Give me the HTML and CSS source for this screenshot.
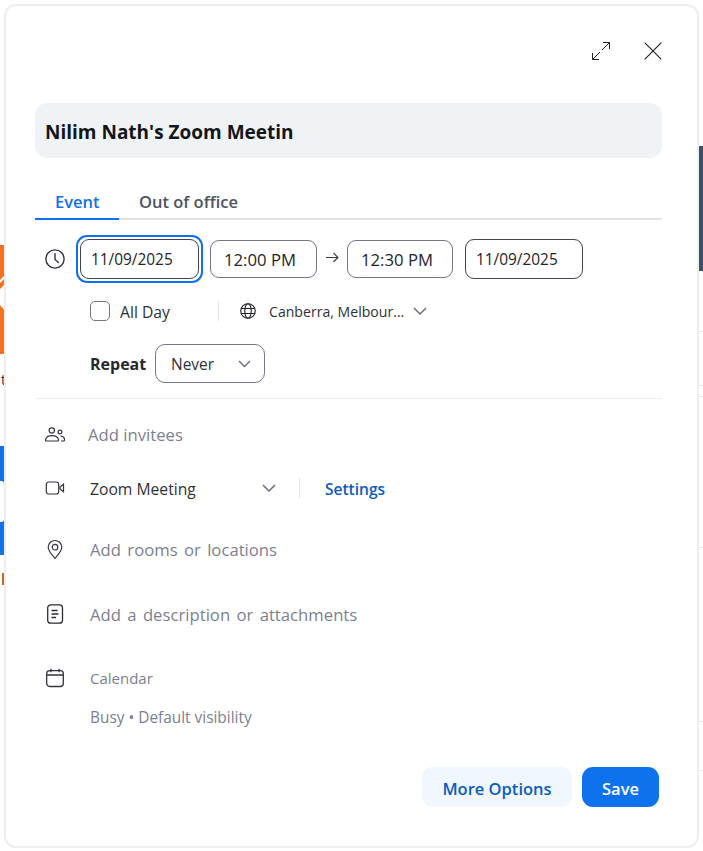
FILE: index.html
```html
<!DOCTYPE html>
<html lang="en">
<head>
  <meta charset="UTF-8">
  <meta name="viewport" content="width=device-width, initial-scale=1.0">
  <link rel="stylesheet" href="styles.css">
  <title>New event</title>
</head>
<body>

  <!-- calendar page showing behind the dialog -->
  <div class="behind">
    <svg class="bg_orange" width="5" height="109" viewBox="0 0 5 109" fill="#f5711f">
      <path d="M0 0h5v30l-5 5z"/>
      <path d="M0 38l5-5v6l-5 5z"/>
      <path d="M0 60l5 6v43H0z"/>
    </svg>
    <span class="bg_letter">t</span>
    <span class="bg_blue"></span>
    <span class="bg_white"></span>
    <span class="bg_tick"></span>
    <span class="bg_dark"></span>
    <span class="bg_line bg_l1"></span>
    <span class="bg_line bg_l2"></span>
    <span class="bg_line bg_l3"></span>
    <span class="bg_line bg_l4"></span>
    <span class="bg_line bg_l5"></span>
    <span class="bg_line bg_l6"></span>
  </div>

  <div class="dialog">

    <div class="top_icons">
      <svg class="top_icon" width="18" height="18" viewBox="0 0 18 18" fill="none" stroke="#1f2024" stroke-width="1">
        <path d="M10 8l7.500-7.500M11 .5h6.500V7M8 10L.5 17.500M.5 11v6.500H7"/>
      </svg>
      <svg class="top_icon" width="18" height="18" viewBox="0 0 18 18" fill="none" stroke="#1f2024" stroke-width="1.100">
        <path d="M.7.7l16.600 16.600M17.300.7L.7 17.300"/>
      </svg>
    </div>

    <div class="title_box">Nilim Nath's Zoom Meetin</div>

    <ul class="tabs">
      <li class="tab tab_on">Event</li>
      <li class="tab">Out of office</li>
    </ul>

    <div class="time_row">
      <svg class="clock" width="20" height="20" viewBox="0 0 20 20" fill="none" stroke="#33343c" stroke-width="1.400">
        <circle cx="10" cy="10" r="9.100"/>
        <path d="M10 4.600V10.400l3.400 3" stroke-linecap="round"/>
      </svg>
      <div class="focus_ring"><div class="field field_date field_dark">11/09/2025</div></div>
      <div class="field field_time">12:00 PM</div>
      <svg class="arrow" width="13" height="11" viewBox="0 0 13 11" fill="none" stroke="#3a3b44" stroke-width="1.100">
        <path d="M0 5.500h12M7.500 1l4.500 4.500L7.500 10"/>
      </svg>
      <div class="field field_time field_short">12:30 PM</div>
      <div class="field field_date field_dark field_last">11/09/2025</div>
    </div>

    <div class="allday_row">
      <span class="checkbox"></span>
      <span class="allday_text">All Day</span>
      <span class="vline"></span>
      <svg class="globe" width="16" height="16" viewBox="0 0 16 16" fill="none" stroke="#24252b" stroke-width="1.100">
        <circle cx="8" cy="8" r="7.300"/>
        <ellipse cx="8" cy="8" rx="3.200" ry="7.300"/>
        <path d="M1 5.500h14M1 10.500h14"/>
      </svg>
      <span class="zone">Canberra, Melbour...</span>
      <svg class="chev" width="14" height="8" viewBox="0 0 14 8" fill="none" stroke="#6a6e7a" stroke-width="1.500">
        <path d="M1 1l6 6 6-6"/>
      </svg>
    </div>

    <div class="repeat_row">
      <span class="repeat_label">Repeat</span>
      <div class="select">
        <span>Never</span>
        <svg width="13" height="8" viewBox="0 0 13 8" fill="none" stroke="#6a6e7a" stroke-width="1.400">
          <path d="M1 1l5.500 5.500L12 1"/>
        </svg>
      </div>
    </div>

    <div class="rule"></div>

    <div class="row row_invite">
      <svg class="row_icon" width="20" height="15" viewBox="0 0 20 15" fill="none" stroke="#33343c" stroke-width="1.200">
        <circle cx="6.800" cy="3.500" r="2.700"/>
        <path d="M1.400 14c-.8 0-1-.8-.8-1.600C1.200 10 3.500 8.600 7 8.600s5.800 1.400 6.400 3.800c.2.800 0 1.600-.8 1.600z"/>
        <circle cx="15" cy="5" r="1.900"/>
        <path d="M15.500 9c2 .2 3.700 1.300 4 3 .2 1.200-.3 2-1.200 2H16"/>
      </svg>
      <span class="ph ph_invite">Add invitees</span>
    </div>

    <div class="row row_zoom">
      <svg class="row_icon" width="20" height="14" viewBox="0 0 20 14" fill="none" stroke="#33343c" stroke-width="1.200">
        <rect x="1.300" y="1" width="12.400" height="12" rx="2.500"/>
        <path d="M15 6l3.500-2.800v7.600L15 8z"/>
      </svg>
      <span class="zoom_text">Zoom Meeting</span>
      <svg class="chev chev_zoom" width="14" height="8" viewBox="0 0 14 8" fill="none" stroke="#6a6e7a" stroke-width="1.500">
        <path d="M1 1l6 6 6-6"/>
      </svg>
      <span class="vline vline_zoom"></span>
      <span class="settings">Settings</span>
    </div>

    <div class="row row_room">
      <svg class="row_icon" width="20" height="20" viewBox="0 0 20 20" fill="none" stroke="#33343c" stroke-width="1.200">
        <path d="M10 19.300c-4-4.300-6.800-7.400-6.800-11a6.800 6.800 0 0 1 13.600 0c0 3.600-2.800 6.700-6.800 11z"/>
        <circle cx="10" cy="8.200" r="2.800"/>
      </svg>
      <span class="ph">Add rooms or locations</span>
    </div>

    <div class="row row_desc">
      <svg class="row_icon" width="20" height="20" viewBox="0 0 20 20" fill="none" stroke="#2b2c33" stroke-width="1.300">
        <rect x="2.700" y=".8" width="14.800" height="18.400" rx="3"/>
        <path d="M6.500 6.500h6M6.500 10h7M6.500 13.500h4.500"/>
      </svg>
      <span class="ph">Add a description or attachments</span>
    </div>

    <div class="row row_cal">
      <svg class="row_icon" width="20" height="20" viewBox="0 0 20 20" fill="none" stroke="#33343c" stroke-width="1.300">
        <rect x="1.700" y="2.700" width="16.600" height="15.800" rx="3"/>
        <path d="M1.700 7h16.600M6 .8v3.500M14 .8v3.500"/>
      </svg>
      <span class="small_text">Calendar</span>
    </div>

    <div class="busy">Busy &bull; Default visibility</div>

    <div class="actions">
      <button class="btn btn_soft">More Options</button>
      <button class="btn btn_save">Save</button>
    </div>

  </div>

</body>
</html>
```

FILE: styles.css
```css
html,body{
  margin:0px; padding:0px; height:851px; overflow:hidden; background:#fff;
  font-family:"Open Sans","Noto Sans",sans-serif;
}

ul,li{
  margin:0px; padding:0px; list-style:none;
}

/* page behind the dialog */
.behind span,.behind svg{
  position:absolute; display:block;
}

.behind .bg_orange{
  left:0px; top:245px;
}

.behind .bg_letter{
  left:1px; top:372px; font-size:14px; color:#333; line-height:16px;
}

.bg_blue{
  left:0px; top:446px; width:5px; height:109px; background:#0e72ed;
}

.bg_white{
  left:0px; top:481px; width:4px; height:41px; background:#fff; border-right:1px solid #8ab9f5; border-radius:0px 4px 4px 0px;
}

.bg_tick{
  left:2px; top:573px; width:2px; height:12px; background:#c8691c;
}

.bg_dark{
  left:699px; top:146px; width:4px; height:125px; background:#3b5068;
}

.bg_line{
  left:699px; width:4px; height:1px; background:#e4e4ea;
}

.bg_l1{ top:331px; }
.bg_l2{ top:385px; }
.bg_l3{ top:396px; }
.bg_l4{ top:547px; }
.bg_l5{ top:721px; }
.bg_l6{ top:770px; }

/* dialog */
.dialog{
  position:absolute; left:4px; top:4px; z-index:2;
  width:695px; height:844px; box-sizing:border-box;
  padding:0px 35px 0px 29px;
  background:#fff; border:2px solid #eeeeef; border-radius:12px;
}

.top_icons{
  display:flex; justify-content:flex-end; align-items:center; gap:34px;
  height:17px; padding-top:36px;
}

.top_icon{
  display:block;
}

.title_box{
  height:55px; margin-top:44px; padding-left:10px; box-sizing:border-box;
  background:#f0f3f6; border-radius:12px;
  font-size:19px; font-weight:700; line-height:58px; color:#131619;
}

.tabs{
  display:flex; height:47px; margin-top:15px; box-sizing:border-box;
  border-bottom:2px solid #e2e3e7;
}

.tab{
  height:47px; padding:15px 0px 0px 20px; box-sizing:border-box;
  font-size:16.500px; font-weight:600; line-height:28px; color:#4e5360; white-space:nowrap;
}

.tab_on{
  width:84px; color:#0e72ed; border-bottom:2px solid #0e72ed;
}

/* date and time */
.time_row{
  display:flex; align-items:center; height:48px; margin-top:15px;
}

.clock{
  margin:0px 11px 0px 10px; flex:none;
}

.focus_ring{
  padding:2px; border:2px solid #0e72ed; border-radius:11px; margin-right:7px;
}

.field{
  box-sizing:border-box; display:flex; align-items:center;
  border:1px solid #747884; border-radius:9px; color:#24252b;
}

.field_date{
  width:119px; height:40px; padding-left:10px; font-size:15.400px;
}

.field_time{
  width:107px; height:38px; padding-left:13px; font-size:16.700px;
}

.field_short{
  width:106px;
}

.field_dark{
  border-color:#3f4450;
}

.arrow{
  margin:0px 8px 0px 9px; flex:none; position:relative; top:-2px;
}

.field_last{
  margin-left:12px; width:118px;
}

.allday_row{
  display:flex; align-items:center; height:20px; margin-top:18px; padding-left:55px;
  font-size:15.700px; color:#2f3138;
}

.checkbox{
  width:20px; height:20px; box-sizing:border-box; margin-right:10px;
  border:1px solid #747884; border-radius:5px;
}

.allday_text{
  width:98px; padding-top:2px;
}

.vline{
  width:1px; height:20px; background:#e2e3e7;
}

.globe{
  margin:0px 13px 0px 21px; flex:none;
}

.zone{
  width:144px; white-space:nowrap; font-size:14.100px;
}

.repeat_row{
  display:flex; align-items:center; height:39px; margin-top:23px; padding-left:55px;
}

.repeat_label{
  width:65px; padding-top:1px; font-size:16px; font-weight:700; color:#26272e;
}

.select{
  display:flex; justify-content:space-between; align-items:center;
  width:110px; height:39px; padding:0px 13px 0px 15px; box-sizing:border-box;
  border:1px solid #747884; border-radius:10px; font-size:15.500px; color:#2f3138;
}

.rule{
  height:1px; margin-top:15px; background:#ededf0;
}

/* rows under the rule */
.row{
  display:flex; align-items:center; height:24px;
}

.row_icon{
  margin-left:10px; flex:none;
}

.ph{
  margin-left:25px; font-size:16.700px; word-spacing:2px; color:#7c7f90; white-space:nowrap;
}

.row_invite{
  margin-top:23px;
}

.ph_invite{
  margin-left:23px; word-spacing:0px;
}

.row_zoom{
  margin-top:30px;
}

.zoom_text{
  width:172px; margin-left:25px; padding-top:1px; font-size:15.700px; color:#2f3138;
}

.vline_zoom{
  margin-left:23px;
}

.chev_zoom{
  flex:none;
}

.settings{
  margin-left:25px; padding-top:2px; font-size:15.500px; font-weight:600; color:#0b5cbd;
}

.row_room{
  margin-top:37px;
}

.row_desc{
  margin-top:41px;
}

.row_cal{
  margin-top:40px;
}

.small_text{
  margin-left:25px; font-size:15px; color:#7c7f90;
}

.busy{
  margin:16px 0px 0px 55px; font-size:15.400px; line-height:24px; color:#7c7f90;
}

.actions{
  display:flex; justify-content:flex-end; gap:10px; margin-top:37px; padding-right:3px;
}

.btn{
  height:40px; padding:2px 0px 0px; border:0px; border-radius:11px;
  font-family:inherit; font-size:16.500px; font-weight:600;
}

.btn_soft{
  width:150px; background:#f0f7ff; color:#0b5cbd;
}

.btn_save{
  width:77px; background:#0e72ed; color:#fff;
}
```
